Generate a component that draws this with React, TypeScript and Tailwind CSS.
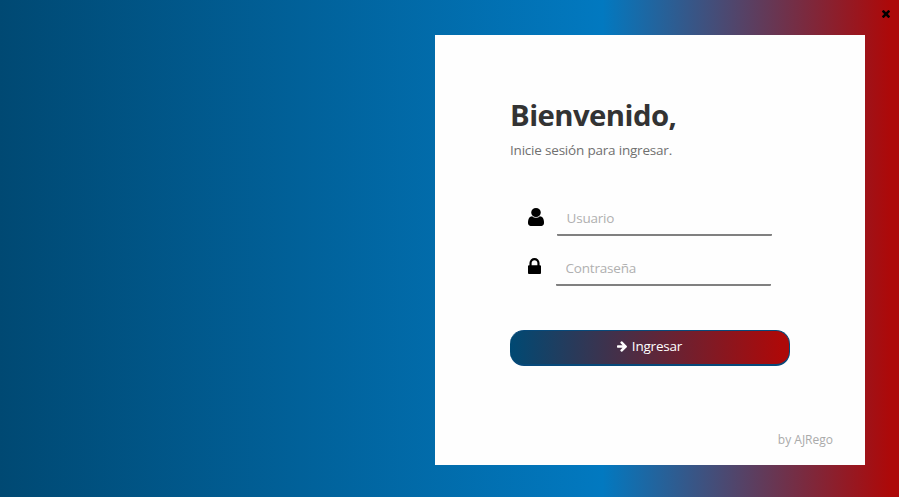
function UserIcon() {
  return (
    <svg className="h-[18px] w-4 shrink-0" viewBox="256 128 1280 1536" preserveAspectRatio="none" fill="#000">
      <path d="M1536 1399q0 109-62.5 187t-150.5 78h-854q-88 0-150.5-78t-62.5-187q0-85 8.5-160.5t31.5-152 58.5-131 94-89 134.5-34.5q131 128 313 128t313-128q76 0 134.5 34.5t94 89 58.5 131 31.5 152 8.5 160.5zm-256-887q0 159-112.5 271.5t-271.5 112.5-271.5-112.5-112.5-271.5 112.5-271.5 271.5-112.5 271.5 112.5 112.5 271.5z" />
    </svg>
  );
}

function LockIcon() {
  return (
    <svg className="h-4 w-[13px] shrink-0" viewBox="320 128 1152 1408" fill="#000">
      <path d="M640 768h512v-192q0-106-75-181t-181-75-181 75-75 181v192zm832 96v576q0 40-28 68t-68 28h-960q-40 0-68-28t-28-68v-576q0-40 28-68t68-28h32v-192q0-184 132-316t316-132 316 132 132 316v192h32q40 0 68 28t28 68z" />
    </svg>
  );
}

function ArrowIcon() {
  return (
    <svg className="h-[11px] w-[10px] shrink-0" viewBox="128 179 1472 1560" fill="#fff">
      <path d="M1600 960q0 54-37 91l-651 651q-39 37-91 37-51 0-90-37l-75-75q-38-38-38-91t38-91l293-293h-704q-52 0-84.5-37.5t-32.5-90.5v-128q0-53 32.5-90.5t84.5-37.5h704l-293-294q-38-36-38-90t38-90l75-75q38-38 90-38 53 0 91 38l651 651q37 35 37 90z" />
    </svg>
  );
}

function CloseIcon() {
  return (
    <svg className="block size-2" viewBox="302 366 1188 1188" fill="#000">
      <path d="M1490 1322q0 40-28 68l-136 136q-28 28-68 28t-68-28l-294-294-294 294q-28 28-68 28t-68-28l-136-136q-28-28-28-68t28-68l294-294-294-294q-28-28-28-68t28-68l136-136q28-28 68-28t68 28l294 294 294-294q28-28 68-28t68 28l136 136q28 28 28 68t-28 68l-294 294 294 294q28 28 28 68z" />
    </svg>
  );
}

const inputClass =
  "h-[35px] w-[215px] rounded-[1px] border-b-2 border-[#808080] bg-transparent pl-[10px] text-[13.5px] tracking-[-0.2px] text-[#333] outline-none placeholder:text-[#b0b0b0] placeholder:opacity-100";

export default function App() {
  return (
    <div className="h-[497px] w-[899px] overflow-hidden bg-[linear-gradient(90deg,#004973_0%,#0279c0_67%,#ad0909_99%)] font-['Open_Sans','Noto_Sans',sans-serif]">
      <div className="flex h-[35px] justify-end pr-[9px] pt-[10px]">
        <button className="size-2" aria-label="Cerrar">
          <CloseIcon />
        </button>
      </div>
      <main className="ml-[435px] flex h-[430px] w-[430px] flex-col bg-[#fefefe] pl-[75px] pt-[60px]">
        <h1 className="h-10 whitespace-nowrap text-[29.3px] font-bold leading-10 tracking-[-0.55px] text-[#333]">Bienvenido,</h1>
        <p className="mt-[5px] h-5 whitespace-nowrap text-[13.5px] leading-5 tracking-[-0.2px] text-[#707070]">Inicie sesión para ingresar.</p>
        <div className="ml-[18px] mt-[41px] flex h-[35px]">
          <div className="w-[28.5px] pt-[7px]"><UserIcon /></div>
          <input className={inputClass} placeholder="Usuario" />
        </div>
        <div className="ml-[18px] mt-[15px] flex h-[35px]">
          <div className="w-[27.5px] pt-[7px]"><LockIcon /></div>
          <input className={inputClass} type="password" placeholder="Contraseña" />
        </div>
        <button className="mt-[44px] flex h-9 w-[280px] items-center justify-center gap-[5px] rounded-[14px] border-b-2 border-r border-t border-[#07497a] bg-[linear-gradient(90deg,#004973,#ad0909_97%)] pb-[3px] text-[13.5px] tracking-[-0.2px] text-white">
          <ArrowIcon />
          Ingresar
        </button>
        <footer className="mr-8 mt-[64px] text-right text-[12px] leading-5 text-[#aaa]">by AJRego</footer>
      </main>
    </div>
  );
}
